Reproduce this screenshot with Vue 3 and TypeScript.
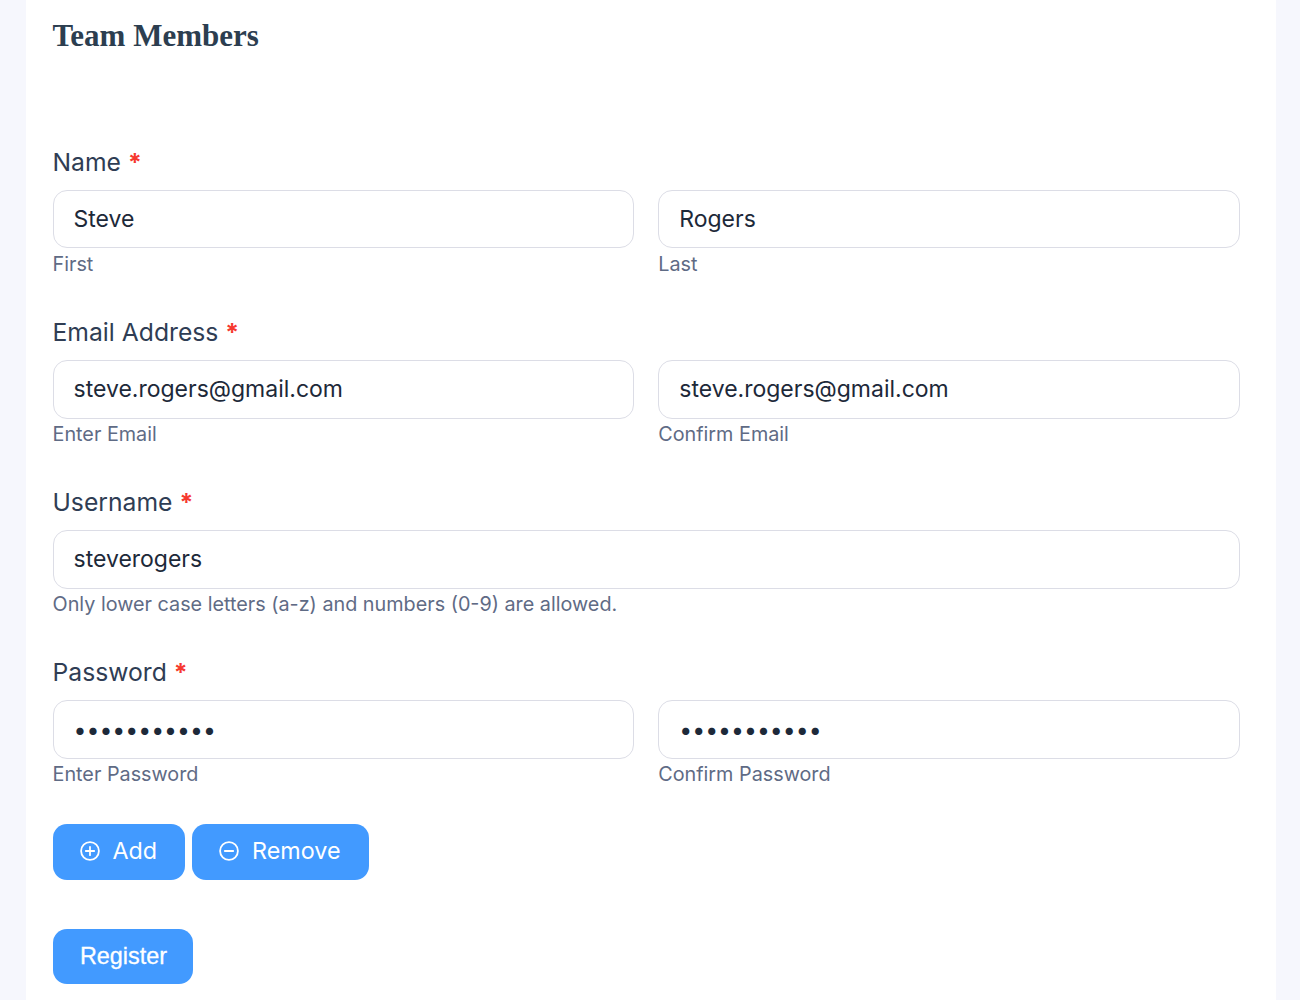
<script setup lang="ts">
interface Part { value: string; hint: string; type?: string }
interface Field { label: string; parts: Part[] }
const fields: Field[] = [
  { label: 'Name', parts: [{ value: 'Steve', hint: 'First' }, { value: 'Rogers', hint: 'Last' }] },
  { label: 'Email Address', parts: [{ value: 'steve.rogers@gmail.com', hint: 'Enter Email' }, { value: 'steve.rogers@gmail.com', hint: 'Confirm Email' }] },
  { label: 'Username', parts: [{ value: 'steverogers', hint: 'Only lower case letters (a-z) and numbers (0-9) are allowed.' }] },
  { label: 'Password', parts: [{ value: 'steverogers', hint: 'Enter Password', type: 'password' }, { value: 'steverogers', hint: 'Confirm Password', type: 'password' }] },
]
</script>

<template>
  <div class="page">
    <main class="card">
      <h2 class="title">Team Members</h2>
      <section v-for="f in fields" :key="f.label" class="field">
        <div class="label">{{ f.label }} <span class="req">*</span></div>
        <div class="row">
          <div v-for="p in f.parts" :key="p.hint" class="part">
            <input class="input" :type="p.type || 'text'" :value="p.value" />
            <div class="hint">{{ p.hint }}</div>
          </div>
        </div>
      </section>
      <div class="actions">
        <button class="btn" type="button">
          <svg class="ico" viewBox="0 0 20 20" fill="none" stroke="currentColor" stroke-width="1.8" stroke-linecap="round"><circle cx="10" cy="10" r="8.9" /><path d="M10 5.8v8.4M5.8 10h8.4" /></svg>
          Add
        </button>
        <button class="btn" type="button">
          <svg class="ico" viewBox="0 0 20 20" fill="none" stroke="currentColor" stroke-width="1.8" stroke-linecap="round"><circle cx="10" cy="10" r="8.9" /><path d="M5.8 10h8.4" /></svg>
          Remove
        </button>
      </div>
      <button class="register" type="button">Register</button>
    </main>
  </div>
</template>

<style>
html, body { margin: 0; background: #f6f7fd; }
</style>

<style scoped>
.page { height: 1000px; overflow: hidden; padding: 0 24px 0 26px; box-sizing: border-box; font-family: Inter, "Noto Sans", sans-serif; }
.card { background: #fff; height: 1000px; box-sizing: border-box; padding: 17px 36px 0 26.5px; }
.title { margin: 0 0 89.7px; font: 700 31px/38px "Liberation Serif", serif; color: #2c3e50; }
.field { height: 170.2px; }
.label { font-size: 24.7px; line-height: 34px; color: #2f3d54; margin-bottom: 11px; height: 34px; }
.req { color: #f6392f; font-weight: 700; }
.row { display: flex; gap: 24px; }
.part { flex: 1; min-width: 0; }
.input { display: block; width: 100%; height: 58.8px; box-sizing: border-box; border: 1px solid #dcdde6; border-radius: 14px; padding: 0 20px; font: 400 23px Inter, sans-serif; color: #1d2939; background: #fff; outline: none; }
.hint { margin-top: 0.1px; font-size: 19.8px; line-height: 30px; color: #5f6b85; }
.actions { display: flex; gap: 7px; margin-top: -1.6px; }
.btn { display: flex; align-items: center; gap: 13px; height: 56px; padding: 0 28px 2px 27px; border: 0; border-radius: 14px; background: #429aff; color: #fff; font: 400 23.3px Inter, sans-serif; }
.ico { width: 20px; height: 20px; margin-top: 1px; }
.register { display: block; margin-top: 49px; width: 140px; height: 55px; padding: 0 0 0 2px; border: 0; border-radius: 14px; background: #429aff; color: #fff; font: 400 23.4px "Liberation Sans", Arial, sans-serif; -webkit-text-stroke: 0.3px #fff; }
</style>
